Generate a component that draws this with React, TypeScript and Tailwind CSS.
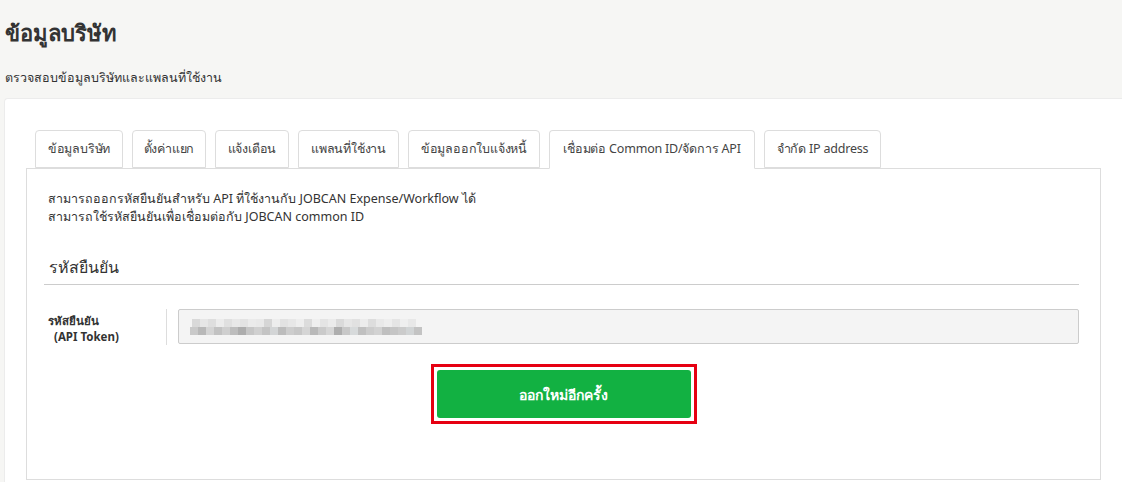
import React from 'react'

const tabs = [
  { label: 'ข้อมูลบริษัท', w: 'w-[88px]' },
  { label: 'ตั้งค่าแยก', w: 'w-[74px]' },
  { label: 'แจ้งเตือน', w: 'w-[74px]' },
  { label: 'แพลนที่ใช้งาน', w: 'w-[101px]' },
  { label: 'ข้อมูลออกใบแจ้งหนี้', w: 'w-[132px]' },
  { label: 'เชื่อมต่อ Common ID/จัดการ API', w: 'w-[206px]' },
  { label: 'จำกัด IP address', w: 'w-[117px]' },
]

const ACTIVE = 5

const row1 = ['bg-[#d9d9d9]', 'bg-[#e6e6e6]', 'bg-[#dedede]', 'bg-[#ececec]', 'bg-[#e0e0e0]', 'bg-[#e8e8e8]', 'bg-[#e3e3e3]', 'bg-[#ebebeb]', 'bg-[#e9e9e9]', 'bg-[#d6d6d6]', 'bg-[#ededed]', 'bg-[#e2e2e2]', 'bg-[#e7e7e7]', 'bg-[#eeeeee]', 'bg-[#dcdcdc]', 'bg-[#efefef]', 'bg-[#e4e4e4]', 'bg-[#ebebeb]', 'bg-[#dadada]', 'bg-[#e6e6e6]', 'bg-[#e1e1e1]', 'bg-[#ececec]', 'bg-[#dddddd]', 'bg-[#e9e9e9]', 'bg-[#eeeeee]', 'bg-[#e5e5e5]', 'bg-[#efefef]', 'bg-[#e8e8e8]']
const row2 = ['bg-[#c9c9c9]', 'bg-[#b8b8b8]', 'bg-[#d4d4d4]', 'bg-[#c2c2c2]', 'bg-[#cfcfcf]', 'bg-[#bdbdbd]', 'bg-[#adadad]', 'bg-[#c6c6c6]', 'bg-[#d0d0d0]', 'bg-[#c4c4c4]', 'bg-[#d3d5d6]', 'bg-[#bcbcbc]', 'bg-[#cdcdcd]', 'bg-[#c7c7c7]', 'bg-[#d5d5d5]', 'bg-[#b9b9b9]', 'bg-[#cacaca]', 'bg-[#d6d6d6]', 'bg-[#aeaeae]', 'bg-[#c8c8c8]', 'bg-[#d7dadb]', 'bg-[#c0c0c0]', 'bg-[#cccccc]', 'bg-[#d2d2d2]', 'bg-[#bfbfbf]', 'bg-[#c5c5c5]', 'bg-[#cbcbcb]', 'bg-[#d1d4d5]', 'bg-[#c3c3c3]']

function Pixelated() {
  return (
    <div className="flex flex-col">
      <div className="flex pl-[2px]">
        {row1.map((c, i) => (
          <span key={i} className={`h-[8px] w-[8px] ${c}`} />
        ))}
      </div>
      <div className="flex">
        {row2.map((c, i) => (
          <span key={i} className={`h-[8px] w-[8px] ${c}`} />
        ))}
      </div>
    </div>
  )
}

export default function App() {
  return (
    <div className="h-[482px] w-full overflow-hidden bg-[#f6f6f4] font-['Noto_Sans','Open_Sans',sans-serif] text-[#333]">
      <div className="pl-[5px] pt-[17px]">
        <h1 className="text-[22px] font-bold leading-[30px] text-[#333]">ข้อมูลบริษัท</h1>
        <p className="mt-[22px] text-[12.5px] leading-[18px] text-[#333]">ตรวจสอบข้อมูลบริษัทและแพลนที่ใช้งาน</p>
      </div>

      <div className="ml-[4px] mt-[11px] h-[400px] rounded-tl-[4px] border-l border-t border-[#ececec] bg-white pl-[21px] pr-[21px] pt-[31px]">
        <div className="flex gap-[9px] pl-[9px]">
          {tabs.map((t, i) => (
            <div
              key={t.label}
              className={`relative z-10 flex h-[38px] items-center justify-center whitespace-nowrap rounded-t-[4px] border border-[#ddd] bg-white text-[12.5px] tracking-[-0.2px] text-[#444] ${t.w} ${
                i === ACTIVE ? '-mb-px h-[39px] border-b-white' : ''
              }`}
            >
              {t.label}
            </div>
          ))}
        </div>

        <div className="h-[312px] border border-[#ddd] bg-white px-[21px] pt-[21px]">
          <div className="text-[12.5px] leading-[18px] text-[#333]">
            <p>สามารถออกรหัสยืนยันสำหรับ API ที่ใช้งานกับ JOBCAN Expense/Workflow ได้</p>
            <p>สามารถใช้รหัสยืนยันเพื่อเชื่อมต่อกับ JOBCAN common ID</p>
          </div>

          <h2 className="mt-[29px] pb-[5px] pl-[1px] text-[16px] leading-[24px] text-[#333]">รหัสยืนยัน</h2>
          <div className="-ml-[4px] h-px bg-[#ccc]" />

          <div className="mt-[24px] flex items-stretch">
            <div className="w-[119px] border-r border-[#ddd] pt-[4px] text-[11.5px] font-bold leading-[16px] text-[#333]">
              <div>รหัสยืนยัน</div>
              <div className="pl-[6px]">(API Token)</div>
            </div>
            <div className="ml-[11px] flex h-[35px] flex-1 items-center rounded-[2px] border border-[#ccc] bg-[#f4f4f4] pl-[11px]">
              <Pixelated />
            </div>
          </div>

          <div className="mt-[19px] flex justify-center">
            <div className="border-[3px] border-[#e60012] p-[3px]">
              <button className="flex h-[48px] w-[254px] items-center justify-center rounded-[3px] bg-[#12b142] text-[14px] font-bold text-white">
                ออกใหม่อีกครั้ง
              </button>
            </div>
          </div>
        </div>
      </div>
    </div>
  )
}
